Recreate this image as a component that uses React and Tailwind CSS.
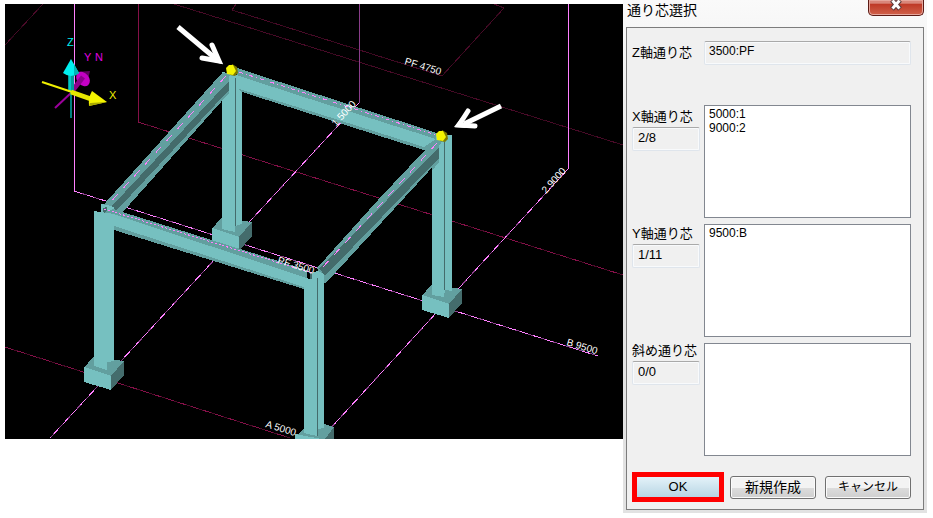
const LIGHT = '#76c0c0';
const MID = '#629f9f';
const DARK = '#446c6c';
const PINK = '#ff80ff';
const PURPLE = '#8a3d8a';
const MAROON = '#851048';
const DIM = '#4a0a28';

function GridLine({ d, bright = PINK, dark = PURPLE }) {
  return (
    <g fill="none" strokeWidth="1">
      <path d={d} stroke={dark} />
      <path d={d} stroke={bright} strokeDasharray="8 5" />
    </g>
  );
}

function Base({ x, y }) {
  return (
    <g transform={`translate(${x} ${y})`}>
      <polygon points="0,11 9,0 40,4 27,20" fill={MID} />
      <polygon points="0,10 27,19 27,33 0,25" fill={LIGHT} />
      <polygon points="27,19 40,4 40,18 27,33" fill={DARK} />
    </g>
  );
}

function Column({ points, edge, y1, y2 }) {
  return (
    <g>
      <polygon points={points} fill={LIGHT} />
      {edge && <path d={`M${edge}.5 ${y1}V${y2}`} stroke={DARK} strokeWidth="1" />}
    </g>
  );
}

function Marker({ x, y }) {
  return (
    <g transform={`translate(${x} ${y})`}>
      <polygon points="1,-6 6,-3 7,3 4,6 -1,5" fill="#7d7a00" />
      <polygon points="-2,-5 2,-5 5,1 2,5 -4,4 -5,-2" fill="#f4f400" />
    </g>
  );
}

function GridLabel({ x, y, angle, children }) {
  return (
    <text
      transform={`translate(${x} ${y}) rotate(${angle})`}
      fill="#fff"
      fontSize="10"
      fontFamily='"Liberation Sans", sans-serif'
    >
      {children}
    </text>
  );
}

function Viewport() {
  return (
    <svg viewBox="5 4 618 435" className="block h-auto w-full bg-black" role="img" aria-label="3D">
      <g shapeRendering="crispEdges">
        <GridLine d="M5 45L43 4" bright={DIM} dark="#2c0618" />
        <GridLine d="M174 4L623 145" bright={DIM} dark="#38081e" />
        <GridLine d="M236 4L232 10L442 76L504 8L494 4" bright={DIM} dark="#38081e" />
        <path d="M138.5 4V122" stroke={MAROON} />
        <GridLine d="M138 122L623 275" bright={MAROON} dark={DIM} />
        <GridLine d="M5 347L290 438" bright={MAROON} dark={DIM} />
        <path d="M359.5 4V103" stroke={PURPLE} />
        <path d="M74.5 4V191M568.5 4V169" stroke={PINK} />
        <GridLine d="M74 191L598 356" />
        <GridLine d="M359 103L50 438" />
        <GridLine d="M568 169L328 431" />

        {/* rear columns */}
        <Base x={212} y={218} />
        <Column points="222,72 242,76 242,224 235,226 235,232 222,229" edge={235} y1={78} y2={226} />
        <Base x={422} y={285} />
        <Column points="432,134 452,135 452,291 445,290 444,297 432,295" edge={444} y1={140} y2={290} />

        {/* rear beam */}
        <polygon points="236,67 243,70 437,133 433,153 242,92 238,89" fill={MID} />
        <polygon points="236,75 310,99 436,139 424,147 310,111 236,88" fill={LIGHT} />
        <path d="M239 72L436 135" stroke={PINK} strokeDasharray="4 3 1 3" />

        {/* left beam */}
        <polygon points="222,73 233,73 229,93 122,213 101,209 106,202" fill={MID} />
        <polygon points="229,81 229,90 117,210 110,208" fill={DARK} />
        <path d="M226 76L106 207" stroke={PINK} strokeDasharray="8 8" />
        <polygon points="229,76 235,72 235,92 229,90" fill={LIGHT} />

        {/* right beam */}
        <polygon points="436,140 444,138 440,159 325,284 317,268 378,200 425,150" fill={MID} />
        <polygon points="439,147 439,158 325,276 319,268 387,200" fill={DARK} />
        <path d="M437 143L322 268" stroke={PINK} strokeDasharray="8 8" />
        <Column points="439,146 446,135 452,135 452,170 439,170" edge={444} y1={142} y2={170} />
        <polygon points="432,165 439,158 439,162 432,171" fill={MID} />

        {/* front beam and columns */}
        <Base x={84} y={357} />
        <polygon points="101,204 107,205 114,207 114,215 101,213" fill={LIGHT} />
        <polygon points="103,208 107,207 107,214 103,213" fill={DARK} />
        <polygon points="113,209 307,270 307,290 114,230 105,212" fill={MID} />
        <polygon points="105,213 113,214 307,278 304,287 114,226" fill={LIGHT} />
        <path d="M104 209L312 273" stroke={PINK} strokeDasharray="2 2" />
        <Column points="94,211 114,214 114,361 107,362 107,370 94,366" />
        <polygon points="295,438 307,425 324,424 334,427 334,439 295,439" fill={MID} />
        <polygon points="295,434 322,439 295,439" fill={LIGHT} />
        <polygon points="334,427 334,439 325,439" fill={DARK} />
        <Column
          points="304,278 311,279 311,273 318,271 324,274 324,428 317,429 317,436 304,433"
          edge={317}
          y1={278}
          y2={436}
        />
        <polygon points="310,273 312,273 312,279 310,279" fill={DARK} />
      </g>

      <GridLabel x={404} y={64} angle={17}>PF 4750</GridLabel>
      <GridLabel x={336} y={127} angle={-48}>1 5000</GridLabel>
      <GridLabel x={546} y={194} angle={-48}>2 9000</GridLabel>
      <GridLabel x={277} y={263} angle={17}>PF 3500</GridLabel>
      <GridLabel x={566} y={345} angle={17}>B 9500</GridLabel>
      <GridLabel x={265} y={427} angle={17}>A 5000</GridLabel>

      <Marker x={231} y={70} />
      <Marker x={441} y={136} />

      {/* pointer arrows */}
      <g fill="#fff" stroke="#fff" strokeWidth="5">
        <path d="M178 27L215 58" fill="none" />
        <path d="M212 45L219 61L202 58" fill="none" strokeLinecap="round" />
        <path d="M213 55L222 64L210 61Z" stroke="none" />
        <path d="M501 106L464 124" fill="none" />
        <path d="M468 111L459 125L475 126" fill="none" strokeLinecap="round" />
        <path d="M461 118L454 127L466 128Z" stroke="none" />
      </g>

      {/* axis gizmo */}
      <path d="M55 108L72 92" stroke="#9c009c" strokeWidth="2" />
      <polygon points="75,72 90,71 87,84" fill="#5e005e" />
      <ellipse cx="83" cy="79" rx="6" ry="8" transform="rotate(-40 83 79)" fill="#c400c4" />
      <path d="M73 90L83 77" stroke="#8c008c" strokeWidth="5" />
      <path d="M71 90V118" stroke="#008080" strokeWidth="2" />
      <path d="M71 74V92" stroke="#009c9c" strokeWidth="6" />
      <path d="M70 74V92" stroke="#00c8c8" strokeWidth="2" />
      <path d="M71 59L79 73Q71 79 63 73Z" fill="#00f0f0" />
      <path d="M74 64L79 73Q77 75 74 76Z" fill="#00b4b4" />
      <path d="M42 82L72 92" stroke="#f0f000" strokeWidth="2" />
      <path d="M71 92L91 99" stroke="#e6e600" strokeWidth="5" />
      <path d="M92 91L107 102L89 106Q88 98 92 91Z" fill="#f4f400" />
      <path d="M90 103L107 102L89 106Z" fill="#a8a800" />
      <g fontSize="11" fontFamily='"Liberation Sans", sans-serif'>
        <text x="67" y="46" fill="#00f0f0">Z</text>
        <text x="84" y="61" fill="#e000e0">Y</text>
        <text x="95" y="61" fill="#e000e0">N</text>
        <text x="109" y="99" fill="#f0f000">X</text>
      </g>
    </svg>
  );
}

const sunken =
  'h-6 min-w-0 rounded-xs border border-[#dfe5ec] border-t-[#a9a9a9] bg-[#f0f0f0] pb-1 text-black shadow-[inset_0_0_0_1px_#f8fafc] outline-none';
const push =
  'h-[23px] w-[86px] rounded-[3px] border border-[#707070] bg-linear-to-b from-[#f3f3f3] from-50% via-[#dddddd] via-50% to-[#cfcfcf] shadow-[inset_0_0_0_1px_#fbfbfb]';

const groups = [
  { id: 'x', label: 'X軸通り芯', count: '2/8', items: ['5000:1', '9000:2'] },
  { id: 'y', label: 'Y軸通り芯', count: '1/11', items: ['9500:B'] },
  { id: 'd', label: '斜め通り芯', count: '0/0', items: [] },
];

function Dialog() {
  return (
    <section
      aria-labelledby="dialog-title"
      className="w-[304px] shrink-0 bg-linear-to-b from-[#fafafa] to-[#e2e2e2] to-40% px-[3px] pb-[3px]"
    >
      <header className="flex h-[27px] items-start justify-between">
        <h1 id="dialog-title" className="pl-px text-sm leading-5 text-black">通り芯選択</h1>
        <button
          type="button"
          aria-label="閉じる"
          className="flex h-4 w-[56px] justify-center rounded-b-[5px] border border-t-0 border-[#5c1a14] bg-linear-to-b from-[#d9867a] from-20% via-[#bf3a28] via-30% to-[#d0614a] shadow-[inset_0_0_0_1px_#e6a79d]"
        >
          <svg viewBox="0 0 14 12" className="h-3 w-3.5">
            <path d="M3 0L11 9M11 0L3 9" stroke="#5b3a3a" strokeWidth="5" />
            <path d="M3.500 .500L10.500 8.500M10.500 .500L3.500 8.500" stroke="#fff" strokeWidth="3" />
          </svg>
        </button>
      </header>
      <form
        className="border border-[#7c7c7c] bg-[#f0f0f0] pt-[13px] pr-3 pb-[7px] pl-[5px]"
        onSubmit={(e) => e.preventDefault()}
      >
        <div className="flex items-center">
          <label htmlFor="z" className="w-[72px] shrink-0 text-[13px] leading-4">Z軸通り芯</label>
          <input id="z" readOnly defaultValue="3500:PF" className={`${sunken} flex-1 px-1 text-xs`} />
        </div>
        <div className="mt-10 flex gap-1">
          <div className="flex w-[68px] shrink-0 flex-col gap-[75px] pt-1">
            {groups.map((g) => (
              <div key={g.id} className="flex flex-col gap-0.5">
                <label htmlFor={g.id} className="text-[13px] leading-4 whitespace-nowrap">{g.label}</label>
                <input
                  readOnly
                  aria-label={`${g.label} 件数`}
                  defaultValue={g.count}
                  className={`${sunken} px-[5px] text-[13px]`}
                />
              </div>
            ))}
          </div>
          <div className="flex min-w-0 flex-1 flex-col gap-1.5">
            {groups.map((g) => (
              <select
                key={g.id}
                id={g.id}
                multiple
                className="h-[113px] w-full appearance-none overflow-hidden border border-[#828790] bg-white px-0.5 py-px text-xs leading-[14px] text-black outline-none"
              >
                {g.items.map((item) => (
                  <option key={item} className="h-3.5 min-h-0 px-0.5 py-0 leading-[14px]">{item}</option>
                ))}
              </select>
            ))}
          </div>
        </div>
        <div className="mt-4 flex items-center gap-1.5">
          <button
            type="submit"
            className="h-[30px] w-[92px] border-[5px] border-[#ff0000] bg-linear-to-b from-[#e4f2f9] to-[#b8d6e4] text-[13px] leading-5"
          >
            OK
          </button>
          <button type="button" className={`${push} text-sm leading-5`}>新規作成</button>
          <button type="button" className={`${push} ml-auto text-xs leading-5`}>キャンセル</button>
        </div>
      </form>
    </section>
  );
}

export default function App() {
  return (
    <main className="flex min-h-screen items-start bg-white pr-1.5 pl-[5px] font-['Liberation_Sans','Noto_Sans_CJK_JP',sans-serif] text-black">
      <div className="min-w-0 flex-1 pt-1">
        <Viewport />
      </div>
      <Dialog />
    </main>
  );
}
